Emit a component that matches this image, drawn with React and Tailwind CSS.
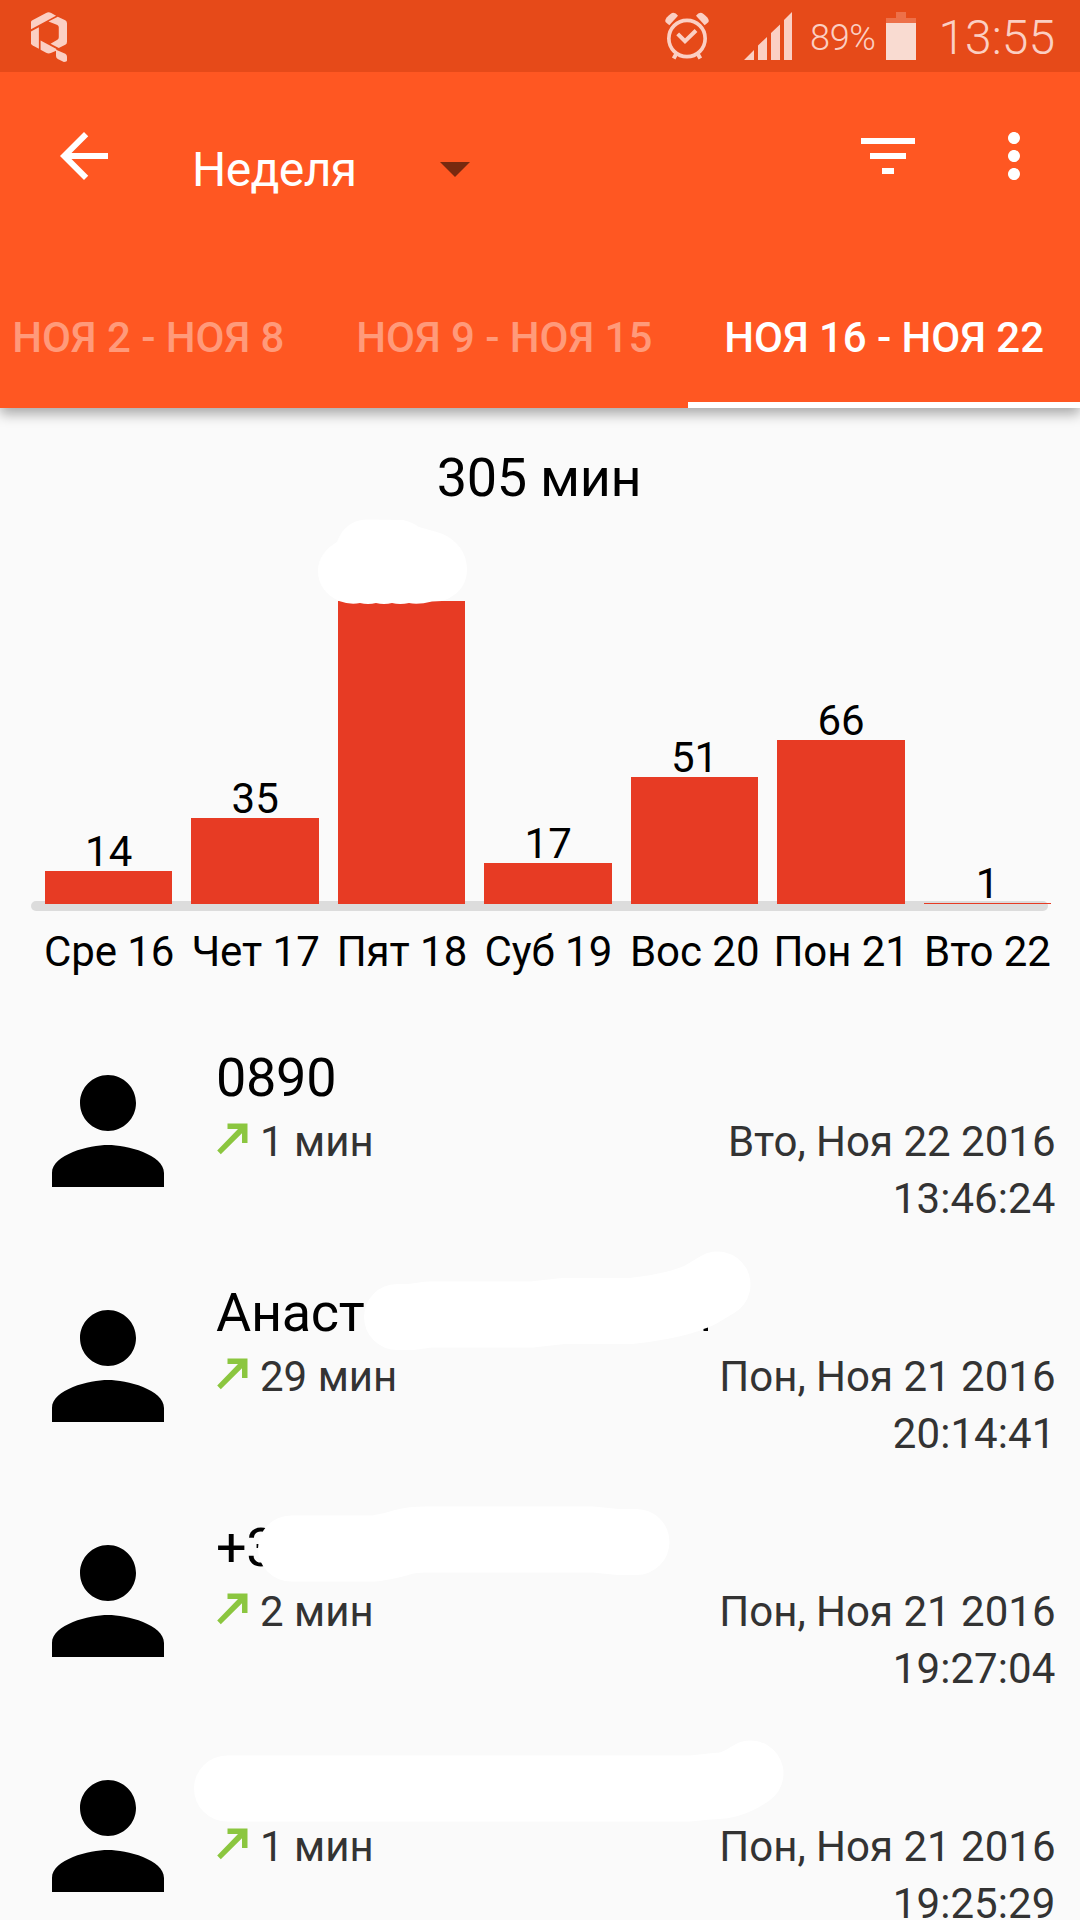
const TABS = [
  { label: 'НОЯ 2 - НОЯ 8', active: false },
  { label: 'НОЯ 9 - НОЯ 15', active: false },
  { label: 'НОЯ 16 - НОЯ 22', active: true },
]

const DAYS = [
  { day: 'Сре 16', value: '14', height: 33 },
  { day: 'Чет 17', value: '35', height: 86 },
  { day: 'Пят 18', value: '', height: 303, hidden: true },
  { day: 'Суб 19', value: '17', height: 41 },
  { day: 'Вос 20', value: '51', height: 127 },
  { day: 'Пон 21', value: '66', height: 164 },
  { day: 'Вто 22', value: '1', height: 1 },
]

// mask: brush stroke over the private part of the name, in row coordinates
const CALLS = [
  { name: '0890', duration: '1 мин', date: 'Вто, Ноя 22 2016', time: '13:46:24' },
  {
    name: 'Анаст',
    duration: '29 мин',
    date: 'Пон, Ноя 21 2016',
    time: '20:14:41',
    mask: 'M397 52 L411 52 L429 49.5 L532 49.5 L563 46 L631 46 Q677 41 700 30 L717.5 19.5',
    rest: 'M703.5 66 V64 L708 62.5 V66z',
  },
  {
    name: '+3',
    duration: '2 мин',
    date: 'Пон, Ноя 21 2016',
    time: '19:27:04',
    mask: 'M291 48.5 H375 Q395 45 403 42 Q413 39.5 425 39.5 H593 L618 42 H636.5',
  },
  {
    name: '',
    duration: '1 мин',
    date: 'Пон, Ноя 21 2016',
    time: '19:25:29',
    mask: 'M227 53.5 H690 L710 51.5 L723 50.5 Q737 48 750.5 38.5',
  },
]

function LogoIcon() {
  return (
    <svg viewBox="90 32 105 151" preserveAspectRatio="none" className="mt-[1px] w-9 h-[50px] fill-[#fbcfc3]">
      <path d="M90 62 Q90 59 94 57 L134 35 Q141 31 149 35 L163 43 L90 84z" />
      <path d="M90 91 L113 78 V143 L95 133 Q90 130 90 126z" />
      <path d="M168 46 L190 57 Q195 60 195 66 V122 Q195 129 190 131 L171 141 L147 128 L167 116 Q171 113 171 108 V78 Q171 73 167 71 L141 61z" />
      <path d="M118 118 L163 143 L165 148 L148 156 Q141 159 134 155 L118 146z" />
      <path d="M163 146 L190 158 Q195 161 195 167 V178 Q195 183 186 183 L168 174 Q163 171 163 165z" />
    </svg>
  )
}

function AlarmIcon() {
  return (
    <svg viewBox="75 38 132 143" className="w-11 h-12 text-[#fbcfc3]" fill="none" stroke="currentColor">
      <circle cx="141" cy="117" r="54.5" strokeWidth="11" />
      <path d="M113 103 L135 125 L168 93" strokeWidth="12" />
      <path d="M109 163 L101 177 M173 163 L181 177" strokeWidth="12" />
      <path d="M88 77 L114 49 Q108 40 100 40 Q93 40 80 54 Q72 64 79 70z" fill="currentColor" stroke="none" />
      <path d="M194 77 L168 49 Q174 40 182 40 Q189 40 202 54 Q210 64 203 70z" fill="currentColor" stroke="none" />
    </svg>
  )
}

function SignalIcon() {
  return (
    <svg viewBox="0 0 48 48" className="w-12 h-12 fill-[#fbcfc3]">
      <path d="M0 48 L10 38 V48z M14 48 V33.5 L23 25 V48z M27 48 V21 L36 12.5 V48z M40 48 V8 L48 0 V48z" />
    </svg>
  )
}

function BatteryIcon() {
  return (
    <svg viewBox="0 0 30 48" className="w-[30px] h-12">
      <path d="M10 0 H20 V6 H30 V11 H0 V6 H10z" className="fill-[#ed7049]" />
      <path d="M0 11 H30 V48 H0z" className="fill-[#f9dbd1]" />
    </svg>
  )
}

function StatusBar() {
  return (
    <div className="flex h-[72px] items-center bg-[#e64a19] pl-[31px] pr-[24px] text-[#fbcfc3]">
      <LogoIcon />
      <div className="ml-auto flex items-center">
        <AlarmIcon />
        <div className="ml-[35px]"><SignalIcon /></div>
        <div className="ml-[18px] w-[76px] pt-[3px] text-[36px] leading-none font-[350] tracking-[-0.3px]">89%</div>
        <div className="-mt-[1px]"><BatteryIcon /></div>
        <div className="flex w-[139px] justify-end pt-[3px] mr-[1px] text-[48px] leading-none font-[350]">13:55</div>
      </div>
    </div>
  )
}

function Toolbar() {
  return (
    <div className="flex h-[168px] items-center pl-12 pr-[30px]">
      <svg viewBox="0 0 24 24" className="size-[72px] fill-white">
        <path d="M20 11H7.83l5.59-5.59L12 4l-8 8 8 8 1.41-1.41L7.83 13H20v-2z" />
      </svg>
      <div className="ml-[72px] flex items-center pt-[27px]">
        <span className="w-[248px] text-[48px] leading-none tracking-[-0.6px] text-white">Неделя</span>
        <svg viewBox="0 0 30 15" className="h-[15px] w-[30px] fill-[#77290f]">
          <path d="M0 0h30L15 15z" />
        </svg>
      </div>
      <svg viewBox="0 0 24 24" className="ml-auto size-[72px] fill-white">
        <path d="M10 18h4v-2h-4v2zM3 6v2h18V6H3zm3 7h12v-2H6v2z" />
      </svg>
      <svg viewBox="0 0 24 24" className="ml-[54px] size-[72px] fill-white">
        <path d="M12 8c1.1 0 2-.9 2-2s-.9-2-2-2-2 .9-2 2 .9 2 2 2zm0 2c-1.1 0-2 .9-2 2s.9 2 2 2 2-.9 2-2-.9-2-2-2zm0 6c-1.1 0-2 .9-2 2s.9 2 2 2 2-.9 2-2-.9-2-2-2z" />
      </svg>
    </div>
  )
}

function Tabs() {
  return (
    <div className="flex h-[168px] justify-end overflow-hidden">
      {TABS.map((tab) => (
        <div
          key={tab.label}
          className={`shrink-0 whitespace-nowrap border-b-[6px] px-9 pt-[73px] text-[42px] leading-[50px] font-medium tracking-[-0.05px] ${
            tab.active ? 'border-white text-white' : 'border-transparent text-[#ff9a7a]'
          }`}
        >
          {tab.label}
        </div>
      ))}
    </div>
  )
}

function Chart() {
  return (
    <div className="h-[622px] pt-[34px]">
      <div className="pr-[2px] text-center text-[54px] leading-[72px] tracking-[-0.3px] text-black">305 мин</div>
      <div className="relative z-10 flex h-[390px] items-end gap-[19.1px] pl-[45px]">
        {DAYS.map((d) => (
          <div key={d.day} className="relative w-[127.4px] shrink-0 text-center">
            <div className="-mb-[5px] h-12 text-[42px] leading-[48px]">{d.value}</div>
            <div className="bg-[#e73b24]" style={{ height: d.height }} />
            {d.hidden && (
              <svg viewBox="317 519 149 86" className="absolute -left-[20px] -top-[39px] h-[86px] w-[149px] fill-white">
                <path d="M336 542 Q344 520 366 519.5 L402 520 Q411 522 418 527 L434 531.5 C452 536 466 550 466 569 C466 586 456 596 441 601 L431 601.5 Q417 605 408 603 Q399 605 391 603 Q383 605 375 603 Q367 605 359 603 Q349 605 338 601 C325 595 317 585 317 571 C317 558 325 548 336 542z" />
              </svg>
            )}
          </div>
        ))}
      </div>
      <div className="ml-[31px] -mt-[3px] h-[9.5px] w-[1017px] rounded-full bg-[#dcdcdc]" />
      <div className="mt-[17px] flex gap-[19.1px] pl-[45.5px]">
        {DAYS.map((d) => (
          <div key={d.day} className="flex w-[127.3px] shrink-0 justify-center whitespace-nowrap text-[42px] leading-[48px] tracking-[-0.05px]">
            {d.day}
          </div>
        ))}
      </div>
    </div>
  )
}

function CallRow({ call }) {
  return (
    <div className="relative flex h-[235px] shrink-0 pl-6 pr-[24.5px] pt-[14px]">
      <svg viewBox="0 0 24 24" className="mt-[3px] size-[168px] shrink-0 fill-black">
        <path d="M12 12c2.21 0 4-1.79 4-4s-1.79-4-4-4-4 1.79-4 4 1.79 4 4 4zm0 2c-2.67 0-8 1.34-8 4v2h16v-2c0-2.66-5.33-4-8-4z" />
      </svg>
      <div className="ml-6 flex-1">
        <div className="h-[67px] text-[54px] leading-[67px] tracking-[-0.3px] text-black">{call.name}</div>
        <div className="mt-[2px] flex text-[42px] leading-[57px] text-[#333333]">
          <svg viewBox="0 0 32 32" className="mt-[10px] size-8 fill-[#8bc63f]">
            <path d="M11.5 0.5H31.5V20H26V10.2L4.8 31.2L1.2 27.6L22 6H11.5z" />
          </svg>
          <span className="ml-3">{call.duration}</span>
          <div className="ml-auto text-right">
            <div>{call.date}</div>
            <div className="tracking-[0.1px]">{call.time}</div>
          </div>
        </div>
      </div>
      {call.mask && (
        <svg viewBox="0 0 1080 235" className="absolute inset-0 h-[235px] w-[1080px] overflow-visible">
          <path d={call.mask} fill="none" stroke="white" strokeWidth="66" strokeLinecap="round" strokeLinejoin="round" />
          {call.rest && <path d={call.rest} fill="black" />}
        </svg>
      )}
    </div>
  )
}

export default function App() {
  return (
    <div className="flex h-[1920px] w-[1080px] flex-col overflow-hidden bg-[#fafafa] font-['Roboto',sans-serif]">
      <header className="relative z-20 shrink-0 bg-[#ff5722] shadow-[0_6px_12px_rgba(0,0,0,0.33)]">
        <StatusBar />
        <Toolbar />
        <Tabs />
      </header>
      <main>
        <Chart />
        {CALLS.map((call) => (
          <CallRow key={call.time} call={call} />
        ))}
      </main>
    </div>
  )
}
